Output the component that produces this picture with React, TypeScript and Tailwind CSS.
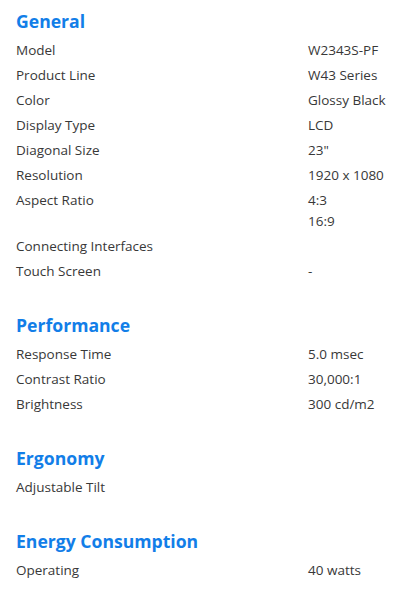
import React from 'react';

type Spec = { label: string; values: string[] };
type Section = { title: string; rows: Spec[] };

const sections: Section[] = [
  {
    title: 'General',
    rows: [
      { label: 'Model', values: ['W2343S-PF'] },
      { label: 'Product Line', values: ['W43 Series'] },
      { label: 'Color', values: ['Glossy Black'] },
      { label: 'Display Type', values: ['LCD'] },
      { label: 'Diagonal Size', values: ['23"'] },
      { label: 'Resolution', values: ['1920 x 1080'] },
      { label: 'Aspect Ratio', values: ['4:3', '16:9'] },
      { label: 'Connecting Interfaces', values: [] },
      { label: 'Touch Screen', values: ['-'] },
    ],
  },
  {
    title: 'Performance',
    rows: [
      { label: 'Response Time', values: ['5.0 msec'] },
      { label: 'Contrast Ratio', values: ['30,000:1'] },
      { label: 'Brightness', values: ['300 cd/m2'] },
    ],
  },
  {
    title: 'Ergonomy',
    rows: [{ label: 'Adjustable Tilt', values: [] }],
  },
  {
    title: 'Energy Consumption',
    rows: [{ label: 'Operating', values: ['40 watts'] }],
  },
];

const App = () => {
  return (
    <div
      className="bg-white min-h-[591px] w-[402px] pl-4 pr-2 pt-[9px] text-[#383838]"
      style={{ fontFamily: '"Open Sans", "Noto Sans", sans-serif' }}
    >
      {sections.map((section) => (
        <section key={section.title} className="mb-[29px]">
          <h2 className="text-[17.6px] leading-6 font-bold text-[#127ee8] mb-[5px]">{section.title}</h2>
          {section.rows.map((row) => (
            <div key={row.label} className="grid grid-cols-[292px_1fr] py-[2px] text-[13.5px] leading-[21px]">
              <div>{row.label}</div>
              <div className="whitespace-nowrap">
                {row.values.map((v) => (
                  <div key={v}>{v}</div>
                ))}
              </div>
            </div>
          ))}
        </section>
      ))}
    </div>
  );
};

export default App;
